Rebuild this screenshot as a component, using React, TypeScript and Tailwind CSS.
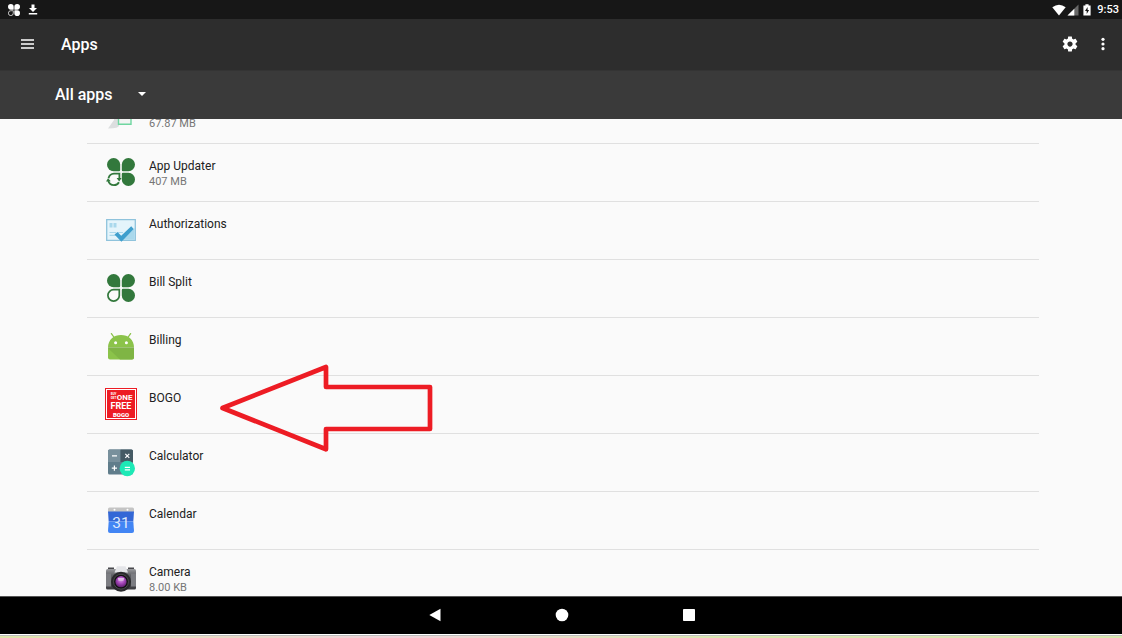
import React from "react";

function CloverIcon({ variant, className }: { variant: "split" | "updater"; className: string }) {
  return (
    <svg viewBox="0 0 28 28" className={className} aria-hidden="true">
      <g fill="currentColor">
        <path d="M6.6 0A6.6 6.6 0 1 0 6.6 13.2H12Q13.2 13.2 13.2 12V6.6A6.6 6.6 0 0 0 6.6 0Z" />
        <path d="M21.4 0A6.6 6.6 0 1 1 21.4 13.2H16Q14.8 13.2 14.8 12V6.6A6.6 6.6 0 0 1 21.4 0Z" />
        <path d="M21.4 28A6.6 6.6 0 1 0 21.4 14.8H16Q14.8 14.8 14.8 16V21.4A6.6 6.6 0 0 0 21.4 28Z" />
      </g>
      {variant === "split" ? (
        <path
          d="M6.7 15.7H12.3V21.4A5.7 5.7 0 1 1 6.7 15.7Z"
          fill="none"
          stroke="currentColor"
          strokeWidth="1.7"
        />
      ) : (
        <g>
          <path
            d="M1.5 20.2Q2.6 15.9 7 15.7H12.4V21M1.2 22.5Q2.4 27.2 7 27.2Q10.4 27 12 24.2"
            fill="none"
            stroke="currentColor"
            strokeWidth="1.8"
          />
          <path d="M-1 23.6L1 20.2L3.8 23.2ZM9.6 20H14.6L12.2 23.4Z" fill="currentColor" />
        </g>
      )}
    </svg>
  );
}

function DocumentIcon() {
  return (
    <svg viewBox="0 0 32 32" className="size-8" aria-hidden="true">
      <path d="M3 30.5L9 22V15H14V27Q15 30.5 3 30.5Z" fill="#dcdedf" />
      <path d="M13.5 6H26V26.3H13.5Z" fill="#f2f4f3" stroke="#6fd6a0" strokeWidth="1.4" />
    </svg>
  );
}

function AuthorizationsIcon() {
  return (
    <svg viewBox="0 0 32 32" className="size-8" aria-hidden="true">
      <path d="M1.7 5.7H30.3V26.3H1.7Z" fill="#e4f4fb" stroke="#8fc3dc" strokeWidth="1.3" />
      <path d="M29.7 14V25.7H17Z" fill="#a9d8ec" />
      <path d="M4.5 9H7.5V13.5H4.5ZM8.5 9H11.5V13.5H8.5Z" fill="#a9d8ec" />
      <path d="M4.5 18.5H11M4.5 21.3H11M13 18.5H18" stroke="#a9d8ec" strokeWidth="1.2" />
      <path d="M9.5 20.5L12.5 18L16.2 21.8L26.2 12.2L28.7 15L16.4 27.8Z" fill="#3f9fcd" />
    </svg>
  );
}

function AndroidIcon() {
  return (
    <svg viewBox="0 0 32 32" className="size-8" aria-hidden="true">
      <path d="M6.4 3.6L9.5 8M25.6 3.6L22.5 8" stroke="#8bc34a" strokeWidth="1.3" strokeLinecap="round" />
      <path d="M3 17.5C3 9.5 9 5 16 5S29 9.5 29 17.5Z" fill="#8bc34a" />
      <path d="M3 18.2H29V27.5Q29 29.5 27 29.5H5Q3 29.5 3 27.5Z" fill="#8bc34a" />
      <path d="M3 18.2H29V27.5Q29 29.5 27 29.5H15L3 18.2Z" fill="#7fb544" />
      <path d="M3 17.9H29" stroke="#6b9c39" strokeWidth=".7" />
      <circle cx="10.6" cy="12.7" r="1.5" fill="#fff" />
      <circle cx="21.4" cy="12.7" r="1.5" fill="#fff" />
    </svg>
  );
}

function BogoIcon() {
  return (
    <svg
      viewBox="0 0 32 32"
      className="size-8"
      aria-hidden="true"
      fontFamily="Roboto, sans-serif"
      fontWeight="700"
      fill="#fff"
      textAnchor="middle"
    >
      <rect width="32" height="32" fill="#ed1c24" />
      <rect x="1.5" y="1.5" width="29" height="29" fill="none" stroke="#fff" strokeWidth="1" />
      <text x="8.6" y="7.4" fontSize="3">BUY</text>
      <text x="8.6" y="11.2" fontSize="3">GET</text>
      <text x="19.6" y="11.8" fontSize="8">ONE</text>
      <text x="16" y="21.2" fontSize="9">FREE</text>
      <text x="16" y="28.8" fontSize="6" fontWeight="900">BOGO</text>
    </svg>
  );
}

function CalculatorIcon() {
  return (
    <svg viewBox="0 0 32 32" className="size-8" aria-hidden="true">
      <rect x="3" y="3.5" width="25" height="25" rx="1.6" fill="#607d8b" />
      <path d="M3 5.1Q3 3.5 4.6 3.5H15.5V16H3Z" fill="#78909c" />
      <path d="M15.5 3.5H26.4Q28 3.5 28 5.1V16H15.5Z" fill="#455a64" />
      <path d="M7 9.8H12M6.8 22.1H12M9.4 19.5V24.7M20.3 7.8L24.3 11.8M24.3 7.8L20.3 11.8" stroke="#fff" strokeWidth="1.2" />
      <circle cx="22.3" cy="22.5" r="7.7" fill="#1de9b6" />
      <path d="M19.8 21.3H25M19.8 23.9H25" stroke="#fff" strokeWidth="1.2" />
    </svg>
  );
}

function CalendarIcon() {
  return (
    <svg viewBox="0 0 32 32" className="size-8" aria-hidden="true">
      <path d="M4.5 3.5H27.5Q29 3.5 29 5V9H3V5Q3 3.5 4.5 3.5Z" fill="#c4c4c4" />
      <circle cx="9.5" cy="5.7" r="1" fill="#fff" />
      <circle cx="22.5" cy="5.7" r="1" fill="#fff" />
      <path d="M3 7.5H29L28.3 17.5H3.7Z" fill="#3367d6" />
      <path d="M3.7 17.5H28.3L29 27Q29 29 27 29H5Q3 29 3 27Z" fill="#4285f4" />
      <text x="16" y="24" fontSize="15.5" fontFamily="Roboto, sans-serif" fill="#dce8fd" textAnchor="middle">31</text>
    </svg>
  );
}

function CameraIcon() {
  return (
    <svg viewBox="0 0 32 32" className="size-8" aria-hidden="true">
      <defs>
        <linearGradient id="camera-body" x1="0" y1="0" x2="0" y2="1">
          <stop offset="0" stopColor="#9a9b9e" />
          <stop offset=".3" stopColor="#606166" />
          <stop offset="1" stopColor="#3c3c40" />
        </linearGradient>
        <radialGradient id="camera-lens" cx=".5" cy=".35" r=".65">
          <stop offset="0" stopColor="#d79be6" />
          <stop offset=".5" stopColor="#a445b8" />
          <stop offset="1" stopColor="#5c1f6c" />
        </radialGradient>
      </defs>
      <path d="M3 5.5H9V8H3ZM23 5.5H29V8H23Z" fill="#48484c" />
      <rect x="1" y="7" width="30" height="20.5" rx="1.5" fill="url(#camera-body)" />
      <path d="M9.5 10.5L12 4.3H20.5L23 10.5Z" fill="#e4e5e8" />
      <path d="M1 11.5H6V24.5H1ZM26 11.5H31V24.5H26Z" fill="#7c7d82" />
      <circle cx="16" cy="19.7" r="10" fill="#29292c" />
      <circle cx="16" cy="19.7" r="7.4" fill="#111" stroke="#606064" strokeWidth=".7" />
      <circle cx="16" cy="19.7" r="5.6" fill="url(#camera-lens)" />
      <path d="M12.8 16H19.2L18.4 18.8H13.6Z" fill="#ddbce5" />
    </svg>
  );
}

type AppEntry = { name?: string; size?: string; icon: React.ReactNode };

const apps: AppEntry[] = [
  { size: "67.87 MB", icon: <DocumentIcon /> },
  { name: "App Updater", size: "407 MB", icon: <CloverIcon variant="updater" className="size-7 overflow-visible text-[#32783c]" /> },
  { name: "Authorizations", icon: <AuthorizationsIcon /> },
  { name: "Bill Split", icon: <CloverIcon variant="split" className="size-7 text-[#32783c]" /> },
  { name: "Billing", icon: <AndroidIcon /> },
  { name: "BOGO", icon: <BogoIcon /> },
  { name: "Calculator", icon: <CalculatorIcon /> },
  { name: "Calendar", icon: <CalendarIcon /> },
  { name: "Camera", size: "8.00 KB", icon: <CameraIcon /> },
];

function AppRow({ app }: { app: AppEntry }) {
  return (
    <li className="flex h-[58px] shrink-0 border-b border-[#e0e0e0] pl-[18px]">
      <div className="flex w-8 items-center justify-center pb-0.5">{app.icon}</div>
      <div className="pt-3.5 pl-3">
        <p className="min-h-4 text-xs leading-4 text-[#212121]">{app.name}</p>
        {app.size && <p className="text-[11px] leading-4 text-[#757575]">{app.size}</p>}
      </div>
    </li>
  );
}

function StatusBar() {
  return (
    <div className="flex h-[19px] shrink-0 items-center justify-between bg-[#171717] pr-[3px] pl-2 text-white">
      <div className="flex items-center gap-2">
        <CloverIcon variant="split" className="size-3" />
        <svg viewBox="0 0 10 12" className="h-3 w-2.5" fill="currentColor" aria-hidden="true">
          <path d="M3.5 .5H6.5V4H9L5 8L1 4H3.5ZM.8 9H9.2V10.4H.8Z" />
        </svg>
      </div>
      <div className="flex items-center">
        <svg viewBox="0 0 14 12" className="mr-px h-3 w-3.5" fill="currentColor" aria-hidden="true">
          <path d="M.3 3.2Q7-1.8 13.7 3.2L7 11.5Z" />
        </svg>
        <svg viewBox="0 0 12 12" className="mr-1 h-3 w-3" fill="currentColor" aria-hidden="true">
          <path d="M11.5.5V11.5H.5Z" opacity=".35" />
          <path d="M7.3 4.7V11.5H.5Z" />
        </svg>
        <svg viewBox="0 0 8 12" className="mr-1.5 h-3 w-2" aria-hidden="true">
          <path d="M2.4.3H5.6V1.5H7.6V11.5H.4V1.5H2.4Z" fill="#fff" />
          <path d="M4.6 3L2 7H3.7V10L6.1 5.9H4.6Z" fill="#171717" />
        </svg>
        <span className="text-[11px] leading-4 font-medium">9:53</span>
      </div>
    </div>
  );
}

function CalloutArrow() {
  return (
    <svg
      viewBox="0 0 214 88"
      className="pointer-events-none absolute top-[245px] left-[219px] h-[88px] w-[214px]"
      fill="none"
      stroke="#ed1c24"
      strokeWidth="4.7"
      strokeLinejoin="round"
      aria-hidden="true"
    >
      <path d="M3.5 44L107 3V23H211V65H107V85.3Z" />
    </svg>
  );
}

export default function App() {
  return (
    <div className="flex h-screen flex-col overflow-hidden bg-[#fafafa] font-[Roboto,sans-serif]">
      <StatusBar />
      <header className="flex h-[51px] shrink-0 items-center bg-[#2d2d2d] pr-3 pl-[18px] text-white">
        <button aria-label="Open navigation" className="px-0.5 pb-0.5">
          <svg viewBox="0 0 15 12" className="h-3 w-[15px]" aria-hidden="true">
            <path d="M1 2H14M1 6H14M1 10H14" stroke="currentColor" strokeWidth="1.6" />
          </svg>
        </button>
        <h1 className="ml-6 flex-1 text-base leading-6 font-medium">Apps</h1>
        <button aria-label="Settings" className="mr-[17px] pb-0.5">
          <svg viewBox="0 0 24 24" className="size-[18px]" fill="currentColor" aria-hidden="true">
            <path d="M19.43 12.98c.04-.32.07-.64.07-.98s-.03-.66-.07-.98l2.11-1.65c.19-.15.24-.42.12-.64l-2-3.46c-.12-.22-.39-.3-.61-.22l-2.49 1c-.52-.4-1.08-.73-1.69-.98l-.38-2.65C14.46 2.18 14.25 2 14 2h-4c-.25 0-.46.18-.49.42l-.38 2.65c-.61.25-1.17.59-1.69.98l-2.49-1c-.23-.09-.49 0-.61.22l-2 3.46c-.13.22-.07.49.12.64l2.11 1.65c-.04.32-.07.65-.07.98s.03.66.07.98l-2.11 1.65c-.19.15-.24.42-.12.64l2 3.46c.12.22.39.3.61.22l2.49-1c.52.4 1.08.73 1.69.98l.38 2.65c.03.24.24.42.49.42h4c.25 0 .46-.18.49-.42l.38-2.65c.61-.25 1.17-.59 1.69-.98l2.49 1c.23.09.49 0 .61-.22l2-3.46c.12-.22.07-.49-.12-.64l-2.11-1.65zM12 15.5c-1.93 0-3.5-1.57-3.5-3.5s1.57-3.5 3.5-3.5 3.5 1.57 3.5 3.5-1.57 3.5-3.5 3.5z" />
          </svg>
        </button>
        <button aria-label="More options" className="px-1 pb-0.5">
          <svg viewBox="0 0 6 16" className="h-4 w-1.5" fill="currentColor" aria-hidden="true">
            <circle cx="3" cy="3.3" r="1.6" />
            <circle cx="3" cy="8" r="1.6" />
            <circle cx="3" cy="12.7" r="1.6" />
          </svg>
        </button>
      </header>
      <div className="flex h-[49px] shrink-0 items-center border-t border-[#343434] bg-[#3a3a3a] pl-[55px] text-white">
        <button className="flex items-center gap-6 text-base leading-6 font-medium">
          All apps
          <svg viewBox="0 0 10 8" className="h-2 w-2.5" fill="currentColor" aria-hidden="true">
            <path d="M1 1H9L5 5Z" />
          </svg>
        </button>
      </div>
      <main className="relative min-h-0 flex-1 overflow-hidden">
        <ul className="-mt-[33px] mr-[83px] ml-[87px] flex flex-col">
          {apps.map((app, index) => (
            <AppRow key={index} app={app} />
          ))}
        </ul>
        <CalloutArrow />
      </main>
      <nav className="flex h-[38px] shrink-0 items-center justify-center gap-[111px] border-t border-[#555] bg-black pb-0.5 pl-0.5 text-white">
        <button aria-label="Back">
          <svg viewBox="0 0 16 16" className="size-4" fill="currentColor" aria-hidden="true">
            <path d="M2.3 8L13.5 1.8V14.2Z" />
          </svg>
        </button>
        <button aria-label="Home">
          <svg viewBox="0 0 16 16" className="size-4" fill="currentColor" aria-hidden="true">
            <circle cx="8" cy="8" r="6.3" />
          </svg>
        </button>
        <button aria-label="Recent apps">
          <svg viewBox="0 0 16 16" className="size-4" fill="currentColor" aria-hidden="true">
            <rect x="2" y="2" width="12" height="12" rx=".8" />
          </svg>
        </button>
      </nav>
      <div className="h-1 shrink-0 border-t border-white">
        <div className="h-full border-t border-[#bdbdbd] bg-linear-to-r from-[#dfe5ae] via-[#f2d3dc] via-35% to-[#d9e8b0] to-65%" />
      </div>
    </div>
  );
}
